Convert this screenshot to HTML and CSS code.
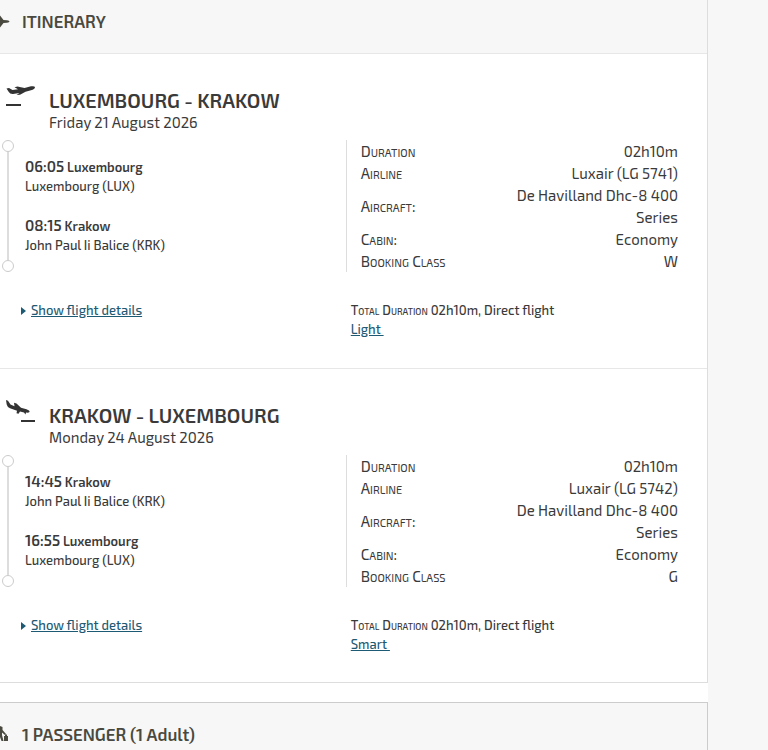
FILE: index.html
```
<!DOCTYPE html>
<html lang="en">
<head>
  <meta charset="UTF-8">
  <meta name="viewport" content="width=device-width, initial-scale=1.0">
  <title>Itinerary</title>
  <link rel="stylesheet" href="styles.css">
</head>
<body>
  <main class="page">
    <section class="panel">
      <header class="panel-header">
        <svg class="panel-icon" viewBox="0 0 10 14" aria-hidden="true">
          <path d="M0 .5L3.500 5L7 5.200Q9.500 5.700 9.500 6.500Q9.500 7.300 7 7.800L3.500 8L0 12.500Z"/>
        </svg>
        <h2>ITINERARY</h2>
      </header>

      <article class="segment">
        <div class="segment-header">
          <svg class="segment-icon" viewBox="0 0 30 24" aria-hidden="true">
            <path d="M.5 3.500L3 3L6.500 5L12 4.300L8.500 2.300L11.500 1.500L18.500 3L25 1.300Q28.800 .8 29 2.200Q28.800 4.100 25 5.300L19.500 6.700L14 9.800L10.500 10L13.500 7.900L7 9.100Q4 9.300 2.800 7Z"/>
            <path d="M0 19H15V21H0Z"/>
          </svg>
          <div>
            <h3>LUXEMBOURG - KRAKOW</h3>
            <p class="date">Friday 21 August 2026</p>
          </div>
        </div>
        <div class="flight">
          <div class="route">
            <div class="timeline"></div>
            <div class="stops">
              <div class="stop">
                <p class="city"><span class="time">06:05</span> Luxembourg</p>
                <p class="airport">Luxembourg (LUX)</p>
              </div>
              <div class="stop">
                <p class="city"><span class="time">08:15</span> Krakow</p>
                <p class="airport">John Paul Ii Balice (KRK)</p>
              </div>
            </div>
          </div>
          <div class="facts">
            <table>
              <tr><th scope="row">Duration</th><td>02h10m</td></tr>
              <tr><th scope="row">Airline</th><td>Luxair (LG 5741)</td></tr>
              <tr><th scope="row">Aircraft:</th><td>De Havilland Dhc-8 400 Series</td></tr>
              <tr><th scope="row">Cabin:</th><td>Economy</td></tr>
              <tr><th scope="row">Booking Class</th><td>W</td></tr>
            </table>
          </div>
        </div>
        <div class="summary">
          <p class="details"><a href="#">Show flight details</a></p>
          <div class="total">
            <p><span class="caps">Total Duration</span> 02h10m, Direct flight</p>
            <p><a href="#">Light&nbsp;</a></p>
          </div>
        </div>
      </article>

      <article class="segment">
        <div class="segment-header">
          <svg class="segment-icon" viewBox="0 0 30 24" aria-hidden="true">
            <path d="M0 0L2 .7L4.500 4.500L8.500 6.300L8 2.700L10.500 3.500L15 7.800L20.500 9.200Q24 10.500 23.500 12Q22.500 13 20 12.500L19.500 14.500L18 12.500L14 11.500L12.500 13.800L10.500 13.200L11 10.800L4 8.200Q1.200 7 .7 4.500Z"/>
            <path d="M15 20H29V22H15Z"/>
          </svg>
          <div>
            <h3>KRAKOW - LUXEMBOURG</h3>
            <p class="date">Monday 24 August 2026</p>
          </div>
        </div>
        <div class="flight">
          <div class="route">
            <div class="timeline"></div>
            <div class="stops">
              <div class="stop">
                <p class="city"><span class="time">14:45</span> Krakow</p>
                <p class="airport">John Paul Ii Balice (KRK)</p>
              </div>
              <div class="stop">
                <p class="city"><span class="time">16:55</span> Luxembourg</p>
                <p class="airport">Luxembourg (LUX)</p>
              </div>
            </div>
          </div>
          <div class="facts">
            <table>
              <tr><th scope="row">Duration</th><td>02h10m</td></tr>
              <tr><th scope="row">Airline</th><td>Luxair (LG 5742)</td></tr>
              <tr><th scope="row">Aircraft:</th><td>De Havilland Dhc-8 400 Series</td></tr>
              <tr><th scope="row">Cabin:</th><td>Economy</td></tr>
              <tr><th scope="row">Booking Class</th><td>G</td></tr>
            </table>
          </div>
        </div>
        <div class="summary">
          <p class="details"><a href="#">Show flight details</a></p>
          <div class="total">
            <p><span class="caps">Total Duration</span> 02h10m, Direct flight</p>
            <p><a href="#">Smart&nbsp;</a></p>
          </div>
        </div>
      </article>
    </section>

    <section class="panel passengers">
      <header class="panel-header">
        <svg class="panel-icon person" viewBox="0 0 10 17" aria-hidden="true">
          <path d="M0 0L2.500 1V4L6 8L5 9L2 6.500V9L3.500 15H1.500L0 11Z"/>
          <path d="M4 10H5V8.500H7V10H8V15H4Z"/>
        </svg>
        <h2>1 PASSENGER (1 Adult)</h2>
      </header>
    </section>
  </main>
</body>
</html>
```
FILE: styles.css
```
* {
  box-sizing: border-box;
}
body {
  margin: 0;
  background-color: #f7f7f7;
  color: #3a3a3a;
  font-family: "Exo 2", Roboto, sans-serif;
  font-size: 13px;
  font-weight: 500;
  line-height: 19px;
}
h2, h3, p {
  margin: 0;
}
a {
  color: #1d5a73;
  text-decoration: underline;
}
.page {
  margin-right: 60px;
  background-color: #fff;
}
.panel {
  border-right: 1px solid #ddd;
  border-bottom: 1px solid #ddd;
}
.passengers {
  margin-top: 19px;
  border-top: 1px solid #ccc;
  border-right-color: #ccc;
  border-bottom: none;
}
.panel-header {
  display: flex;
  align-items: center;
  padding: 10px 0 20px;
  background-color: #f7f7f7;
  color: #4a493f;
}
.passengers .panel-header {
  padding-top: 20px;
}
.panel-header h2 {
  font-size: 17px;
  font-weight: 600;
  line-height: 23px;
}
.panel-icon {
  width: 10px;
  height: 14px;
  margin-right: 12px;
  fill: #4a493f;
}
.panel-icon.person {
  height: 17px;
}
.segment {
  padding: 35px 29px 29px 0;
  border-top: 1px solid #e7e7e7;
}
.segment + .segment {
  padding-bottom: 28px;
}
.segment-header {
  display: flex;
  margin-bottom: 8px;
}
.segment-icon {
  width: 30px;
  height: 24px;
  margin: -4px 13px 0 6px;
  fill: #333;
}
.segment-header h3 {
  font-size: 20px;
  font-weight: 600;
  line-height: 23px;
}
.date {
  font-size: 15px;
  font-weight: 400;
  line-height: 20px;
}
.flight, .summary {
  display: grid;
  grid-template-columns: 51% 49%;
}
.route {
  display: flex;
  gap: 12px;
}
/* vertical line with a ring at each end */
.timeline {
  display: flex;
  flex-direction: column;
  align-items: center;
  justify-content: space-between;
  width: 10px;
  margin-left: 3px;
  background: linear-gradient(#ddd, #ddd) center / 2px 100% no-repeat;
}
.timeline::before, .timeline::after {
  content: "";
  width: 10px;
  height: 10px;
  border: 1px solid #ccc;
  border-radius: 50%;
  background-color: #fff;
}
.stops {
  display: flex;
  flex-direction: column;
  gap: 19px;
  padding-top: 16px;
}
.city {
  font-weight: 600;
  line-height: 20px;
}
.time {
  font-size: 15px;
}
.facts {
  border-left: 1px solid #ddd;
  padding-left: 14px;
}
table {
  width: 100%;
  border-collapse: collapse;
}
th, td {
  padding: 0;
  font-size: 15px;
  font-weight: 400;
  line-height: 22px;
}
th {
  width: 40%;
  font-variant: small-caps;
  text-align: left;
}
td {
  text-align: right;
}
.caps {
  font-variant: small-caps;
}
.summary {
  margin-top: 29px;
}
.details::before {
  content: "";
  display: inline-block;
  margin: 0 5px 0 21px;
  border: solid transparent;
  border-width: 4px 0 4px 5px;
  border-left-color: #1d5a73;
}
.total {
  padding-left: 5px;
}
```
